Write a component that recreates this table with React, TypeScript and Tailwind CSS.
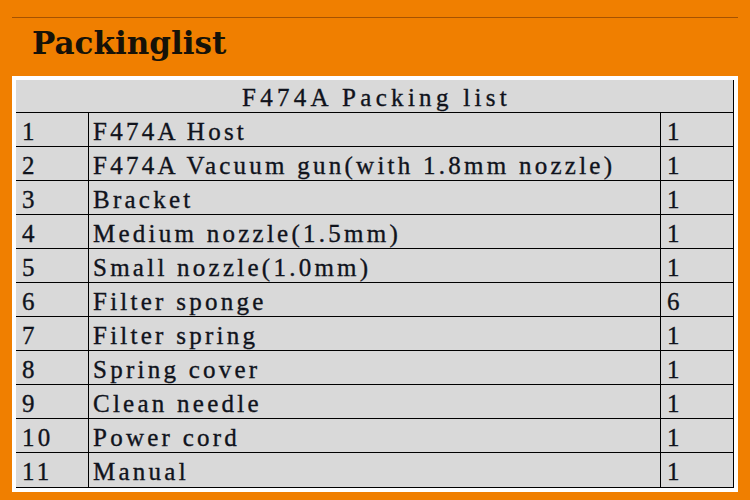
const items: [string, string, string][] = [
  ['1', 'F474A Host', '1'],
  ['2', 'F474A Vacuum gun(with 1.8mm nozzle)', '1'],
  ['3', 'Bracket', '1'],
  ['4', 'Medium nozzle(1.5mm)', '1'],
  ['5', 'Small nozzle(1.0mm)', '1'],
  ['6', 'Filter sponge', '6'],
  ['7', 'Filter spring', '1'],
  ['8', 'Spring cover', '1'],
  ['9', 'Clean needle', '1'],
  ['10', 'Power cord', '1'],
  ['11', 'Manual', '1'],
];

export default function App() {
  return (
    <div className="w-[750px] h-[500px] bg-[#f07f00] pt-[17px] overflow-hidden">
      {/* Top rule */}
      <div className="ml-[12px] w-[726px] h-px bg-[#a65200]" />

      <h1 className="mt-[10px] ml-[32px] h-[30px] text-[31px] leading-[30px] font-bold text-[#161208] font-['DejaVu_Serif',serif]">
        Packinglist
      </h1>

      {/* Table card */}
      <div className="mt-[18px] ml-[12px] w-[726px] bg-white p-[4px]">
        <div className="bg-[#d9d9d9] text-[#10131c] font-['Liberation_Serif',serif] text-[25px] tracking-[3.25px] leading-[24px] [-webkit-text-stroke:0.35px_#10131c] border-r border-b border-black">
          <div className="h-[33px] pt-[6px] pl-[4px] text-center tracking-[4.3px] border-b border-black whitespace-pre">
            F474A Packing list
          </div>
          {items.map(([no, name, qty], i) => (
            <div
              key={no}
              className={`flex h-[34px] ${i < items.length - 1 ? 'border-b border-black' : ''}`}
            >
              <div className="w-[73px] pl-[6px] pt-[7px] border-r border-black">{no}</div>
              <div className="w-[572px] pl-[4px] pt-[7px] border-r border-black whitespace-pre">{name}</div>
              <div className="flex-1 pl-[6px] pt-[7px]">{qty}</div>
            </div>
          ))}
        </div>
      </div>
    </div>
  );
}
